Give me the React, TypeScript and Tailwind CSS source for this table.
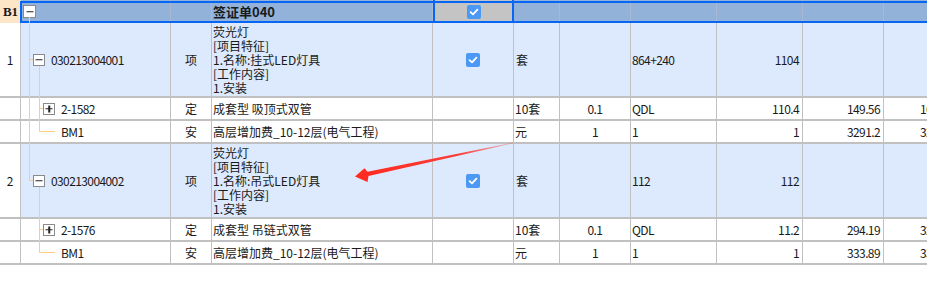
import React from "react";

type MainRow = {
  kind: "main";
  no: string;
  code: string;
  desc: string[];
  unit: string;
  expr: string;
  qty: string;
};

type SubRow = {
  kind: "sub";
  code: string;
  box: boolean;
  type: string;
  desc: string;
  unit: string;
  amount: string;
  expr: string;
  qty: string;
  price: string;
  total: string;
};

const rows: (MainRow | SubRow)[] = [
  {
    kind: "main",
    no: "1",
    code: "030213004001",
    desc: ["荧光灯", "[项目特征]", "1.名称:挂式LED灯具", "[工作内容]", "1.安装"],
    unit: "套",
    expr: "864+240",
    qty: "1104",
  },
  { kind: "sub", code: "2-1582", box: true, type: "定", desc: "成套型 吸顶式双管", unit: "10套", amount: "0.1", expr: "QDL", qty: "110.4", price: "149.56", total: "16511.42" },
  { kind: "sub", code: "BM1", box: false, type: "安", desc: "高层增加费_10-12层(电气工程)", unit: "元", amount: "1", expr: "1", qty: "1", price: "3291.2", total: "3291.2" },
  {
    kind: "main",
    no: "2",
    code: "030213004002",
    desc: ["荧光灯", "[项目特征]", "1.名称:吊式LED灯具", "[工作内容]", "1.安装"],
    unit: "套",
    expr: "112",
    qty: "112",
  },
  { kind: "sub", code: "2-1576", box: true, type: "定", desc: "成套型 吊链式双管", unit: "10套", amount: "0.1", expr: "QDL", qty: "11.2", price: "294.19", total: "3294.93" },
  { kind: "sub", code: "BM1", box: false, type: "安", desc: "高层增加费_10-12层(电气工程)", unit: "元", amount: "1", expr: "1", qty: "1", price: "333.89", total: "333.89" },
];

const cols = "grid grid-cols-[21px_150px_41px_221px_81px_46px_71px_86px_86px_81px_86px]";
const cell = "border-r border-[#c0c0c0] flex items-center overflow-hidden whitespace-nowrap";
const num = "tracking-[-0.6px]";

function TreeBox({ open, size = 12 }: { open: boolean; size?: number }) {
  return (
    <span
      className="relative shrink-0 border border-[#8a8a8a] bg-white"
      style={{ width: size, height: size }}
    >
      <span className="absolute left-1/2 top-1/2 h-[1.5px] w-[7px] -translate-x-1/2 -translate-y-1/2 bg-[#222]" />
      {!open && (
        <span className="absolute left-1/2 top-1/2 h-[7px] w-[1.5px] -translate-x-1/2 -translate-y-1/2 bg-[#222]" />
      )}
    </span>
  );
}

function Check() {
  return (
    <span className="flex h-[14px] w-[14px] items-center justify-center rounded-[2px] bg-[#4b99f5]">
      <svg width="10" height="10" viewBox="0 0 10 10">
        <path d="M1.6 5.2 L4 7.4 L8.4 2.6" fill="none" stroke="white" strokeWidth="1.8" strokeLinecap="round" strokeLinejoin="round" />
      </svg>
    </span>
  );
}

function Main({ r }: { r: MainRow }) {
  return (
    <div className={`${cols} h-[75px] border-b-2 border-[#c0c0c0]`}>
      <div className={`${cell} justify-center bg-white`}>{r.no}</div>
      <div className={`${cell} bg-[#dde9fc] pl-[12px] gap-[6px]`}>
        <TreeBox open />
        <span className={num}>{r.code}</span>
      </div>
      <div className={`${cell} bg-[#dde9fc] justify-center`}>项</div>
      <div className={`${cell} bg-[#dde9fc] pl-px`}>
        <div className="flex flex-col leading-[14px]">
          {r.desc.map((d, i) => (
            <span key={i}>{d}</span>
          ))}
        </div>
      </div>
      <div className={`${cell} bg-[#dde9fc] justify-center`}>
        <Check />
      </div>
      <div className={`${cell} bg-[#dde9fc] pl-0.5`}>{r.unit}</div>
      <div className={`${cell} bg-[#dde9fc]`} />
      <div className={`${cell} bg-[#dde9fc] pl-px ${num}`}>{r.expr}</div>
      <div className={`${cell} bg-[#dde9fc] justify-end pr-[3px] ${num}`}>{r.qty}</div>
      <div className={`${cell} bg-[#dde9fc]`} />
      <div className={`${cell} bg-[#dde9fc]`} />
    </div>
  );
}

function Sub({ r }: { r: SubRow }) {
  return (
    <div className={`${cols} h-[23px] border-b-2 border-[#c0c0c0] bg-white`}>
      <div className={cell} />
      <div className={`${cell} ${r.box ? "pl-[22px] gap-[6px]" : "pl-[40px]"}`}>
        {r.box && <TreeBox open={false} />}
        <span className={num}>{r.code}</span>
      </div>
      <div className={`${cell} justify-center`}>{r.type}</div>
      <div className={`${cell} pl-px`}>{r.desc}</div>
      <div className={cell} />
      <div className={`${cell} pl-px`}>{r.unit}</div>
      <div className={`${cell} justify-center ${num}`}>{r.amount}</div>
      <div className={`${cell} pl-px ${num}`}>{r.expr}</div>
      <div className={`${cell} justify-end pr-[3px] ${num}`}>{r.qty}</div>
      <div className={`${cell} justify-end pr-[3px] ${num}`}>{r.price}</div>
      <div className={`${cell} pl-[36px] ${num}`}>{r.total}</div>
    </div>
  );
}

function Header() {
  const h = "border-r border-[#aab9cf] bg-[#92b2da] flex items-center overflow-hidden whitespace-nowrap";
  return (
    <div className="relative">
      <div className={`${cols} h-[23px]`}>
        <div className="flex items-center justify-center bg-[#fde5c8] font-bold font-['Liberation_Serif',serif] text-[13px]">B1</div>
        <div className={`${h} pl-[2px]`}>
          <TreeBox open size={13} />
        </div>
        <div className={h} />
        <div className={`${h} pl-px font-bold text-[13px]`}>签证单040</div>
        <div className="flex items-center justify-center bg-[#c4c4c4] border-x-2 border-[#0866f5]">
          <Check />
        </div>
        <div className={h} />
        <div className={h} />
        <div className={h} />
        <div className={h} />
        <div className={h} />
        <div className={h} />
      </div>
      <div className="pointer-events-none absolute left-[20px] top-[1px] h-[22px] w-[960px] border-2 border-[#0866f5]" />
    </div>
  );
}

function TreeLines() {
  const c = "#fec98a";
  return (
    <svg className="pointer-events-none absolute left-0 top-0" width="927" height="282">
      <g stroke={c} strokeWidth="1" fill="none">
        <path d="M29.5 17 V180.5 H33" />
        <path d="M29 59.5 H33" />
        <path d="M39.5 66 V131.5 H55" />
        <path d="M39 108.5 H43" />
        <path d="M39.5 187 V252.5 H55" />
        <path d="M39 229.5 H43" />
      </g>
    </svg>
  );
}

function Arrow() {
  return (
    <svg className="pointer-events-none absolute left-0 top-0" width="927" height="282">
      <defs>
        <linearGradient id="fade" x1="513" y1="143" x2="355" y2="176" gradientUnits="userSpaceOnUse">
          <stop offset="0" stopColor="#ff2a20" stopOpacity="0.25" />
          <stop offset="0.35" stopColor="#ff2a20" stopOpacity="0.9" />
          <stop offset="1" stopColor="#ff2a20" stopOpacity="1" />
        </linearGradient>
      </defs>
      <polygon
        points="513,142.6 367.5,171.8 364.5,168.3 355,176.6 367.5,182 368.5,176 513,143.4"
        fill="url(#fade)"
      />
    </svg>
  );
}

export default function App() {
  return (
    <div className="relative h-[282px] w-[927px] overflow-hidden bg-white text-[12px] text-[#1a1a1a] font-['Noto_Sans_CJK_SC',sans-serif]">
      <Header />
      {rows.map((r, i) => (r.kind === "main" ? <Main key={i} r={r} /> : <Sub key={i} r={r} />))}
      <TreeLines />
      <Arrow />
    </div>
  );
}
